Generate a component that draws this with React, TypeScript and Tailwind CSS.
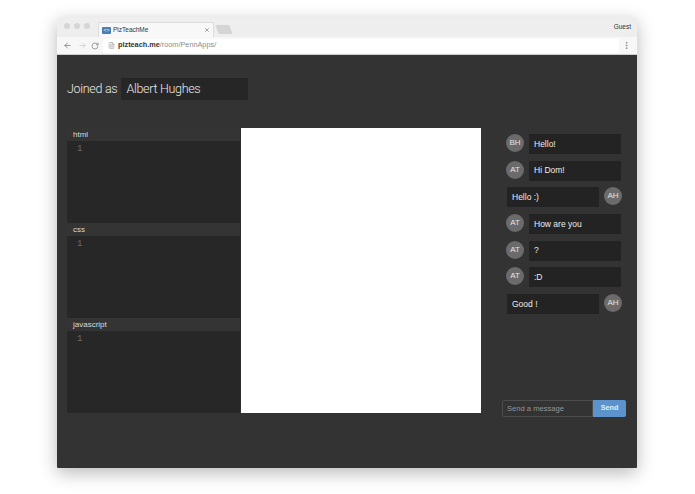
import { ArrowLeft, ArrowRight, RotateCw, FileText, X, EllipsisVertical } from 'lucide-react';

const messages = [
  { initials: 'BH', text: 'Hello!', mine: false },
  { initials: 'AT', text: 'Hi Dom!', mine: false },
  { initials: 'AH', text: 'Hello :)', mine: true },
  { initials: 'AT', text: 'How are you', mine: false },
  { initials: 'AT', text: '?', mine: false },
  { initials: 'AT', text: ':D', mine: false },
  { initials: 'AH', text: 'Good !', mine: true },
];

function Editor({ name }: { name: string }) {
  return (
    <div className="flex h-[95.33px] flex-col">
      <div className="flex h-[13px] shrink-0 items-center bg-[#343434] pl-[6px] text-[8px] text-[#d8d8d8]">
        {name}
      </div>
      <div className="flex-1 bg-[#272727] pl-[10px] pt-[2px] font-['Liberation_Mono',monospace] text-[9px] leading-[12px] text-[#6a6a6a]">
        1
      </div>
    </div>
  );
}

function Message({ initials, text, mine }: { initials: string; text: string; mine: boolean }) {
  const avatar = (
    <div className="flex h-[18px] w-[18px] shrink-0 items-center justify-center rounded-full bg-[#6b6b6b] text-[8px] text-[#e4e4e4]">
      {initials}
    </div>
  );
  const bubble = (
    <div className="flex h-[20px] w-[92px] items-center rounded-[1px] bg-[#232323] pl-[5px] text-[8.5px] text-[#ececec]">
      {text}
    </div>
  );
  if (mine) {
    return (
      <div className="flex h-[26.7px] items-start gap-[5px] pl-[5px]">
        {bubble}
        {avatar}
      </div>
    );
  }
  return (
    <div className="flex h-[26.7px] items-start gap-[5px] pl-[4px]">
      {avatar}
      {bubble}
    </div>
  );
}

export default function App() {
  return (
    <div className="h-[494px] w-[695px] overflow-hidden bg-white pl-[57px] pt-[17px] font-['Liberation_Sans',Arial,sans-serif]">
      <div className="flex h-[451px] w-[580px] flex-col overflow-hidden rounded-t-[3px] rounded-b-[1px] shadow-[0_5px_18px_rgba(0,0,0,0.28)]">
        {/* tab strip */}
        <div className="flex h-[20px] shrink-0 items-end bg-[#eeeeee] pl-[7px]">
          <div className="mb-[8px] flex gap-[4px]">
            <span className="h-[6px] w-[6px] rounded-full bg-[#d6d6d6]" />
            <span className="h-[6px] w-[6px] rounded-full bg-[#d6d6d6]" />
            <span className="h-[6px] w-[6px] rounded-full bg-[#d6d6d6]" />
          </div>
          <div className="ml-[8px] flex h-[15px] w-[116px] items-center rounded-t-[2px] border border-b-0 border-[#dcdcdc] bg-[#f8f8f8] pl-[3px] pr-[3px]">
            <span className="flex h-[7px] w-[9px] shrink-0 items-center justify-center rounded-[1px] bg-[#4a7fb5] text-[5px] leading-none text-white">
              &lt;&gt;
            </span>
            <span className="ml-[2px] text-[6.5px] text-[#333333]">PlzTeachMe</span>
            <X className="ml-auto h-[6px] w-[6px] text-[#555555]" strokeWidth={2} />
          </div>
          <div className="mb-[3px] ml-[3px] h-[9px] w-[14px] skew-x-[20deg] rounded-[1px] bg-[#d5d5d5]" />
          <span className="mb-[5px] ml-auto pr-[6px] text-[6.5px] text-[#333333]">Guest</span>
        </div>
        {/* toolbar */}
        <div className="flex h-[18px] shrink-0 items-center border-b border-[#cfcfcf] bg-[#f7f7f7] pl-[6px] pr-[6px]">
          <ArrowLeft className="h-[9px] w-[9px] text-[#777777]" strokeWidth={2} />
          <ArrowRight className="ml-[6px] h-[9px] w-[9px] text-[#cccccc]" strokeWidth={2} />
          <RotateCw className="ml-[4px] h-[8px] w-[8px] text-[#777777]" strokeWidth={2} />
          <div className="ml-[4px] flex h-[14px] flex-1 items-center rounded-[2px] bg-white pl-[5px] text-[7.3px]">
            <FileText className="h-[7px] w-[7px] text-[#777777]" strokeWidth={1.5} />
            <span className="ml-[3px] font-bold text-[#333333]">plzteach.me</span>
            <span className="text-[#8c8c8c]">/room/PennApps/</span>
          </div>
          <EllipsisVertical className="ml-[3px] h-[9px] w-[9px] text-[#777777]" strokeWidth={2} />
        </div>
        {/* page */}
        <div className="flex flex-1 flex-col bg-[#333333] pl-[10px] pr-[11px] pt-[23px]">
          <div className="flex h-[22px] items-center font-['Roboto',sans-serif] font-light">
            <span className="text-[12.5px] tracking-[-0.3px] text-[#e8e8e8]">Joined as</span>
            <div className="ml-[4px] flex h-[22px] w-[127px] items-center rounded-[1px] bg-[#262626] pl-[5px] text-[12.5px] tracking-[-0.3px] text-[#e8e8e8]">
              Albert Hughes
            </div>
          </div>
          <div className="mt-[28px] flex items-start">
            <div className="flex h-[285px] w-[173px] flex-col">
              <Editor name="html" />
              <Editor name="css" />
              <Editor name="javascript" />
            </div>
            <div className="h-[285px] w-[241px] border-l border-[#2e2e2e] bg-white" />
            <div className="ml-[21px] flex h-[289px] w-[124px] flex-col pt-[6px]">
              {messages.map((m, i) => (
                <Message key={i} initials={m.initials} text={m.text} mine={m.mine} />
              ))}
              <div className="mt-auto flex h-[17px]">
                <div className="flex w-[91px] items-center rounded-l-[2px] border border-[#4d4d4d] pl-[4px] text-[7.6px] text-[#969696]">
                  Send a message
                </div>
                <div className="flex flex-1 items-center justify-center rounded-r-[2px] bg-[#5d93cd] text-[7.2px] font-bold text-[#e6eff8]">
                  Send
                </div>
              </div>
            </div>
          </div>
        </div>
      </div>
    </div>
  );
}
